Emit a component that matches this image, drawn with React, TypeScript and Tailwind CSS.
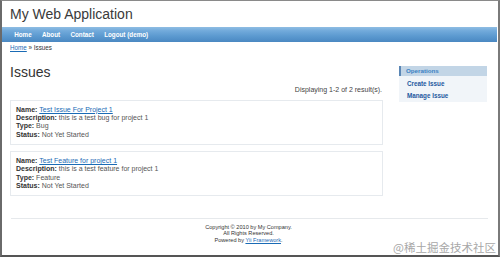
import React from "react";

const F = { fontFamily: '"Liberation Sans", Arial, sans-serif' };

function Card({ title, desc, type }: { title: string; desc: string; type: string }) {
  return (
    <div className="border border-[#e6eaee] bg-white pl-[5px] pt-[5px] pb-[4.4px] text-[7px] leading-[8.4px] text-[#555]">
      <div>
        <b className="text-[#333]">Name:</b>{" "}
        <a className="text-[#1a6bb5] underline">{title}</a>
      </div>
      <div>
        <b className="text-[#333]">Description:</b> {desc}
      </div>
      <div>
        <b className="text-[#333]">Type:</b> {type}
      </div>
      <div>
        <b className="text-[#333]">Status:</b> Not Yet Started
      </div>
    </div>
  );
}

export default function App() {
  return (
    <div
      style={F}
      className="relative w-[500px] h-[257px] overflow-hidden bg-white border-t border-t-[#8a8a8a] border-l-2 border-l-[#6a6a6a] border-r-2 border-r-[#7a7a7a] border-b-2 border-b-[#555]"
    >
      <div className="h-[26px] pl-[8px] pt-[5px] text-[14px] leading-[16px] text-[#3a3a3a]">
        My Web Application
      </div>
      <div className="mr-[1px] h-[15px] flex items-center pl-[7px] bg-[linear-gradient(180deg,#8fbde3_0%,#72aadb_25%,#5c9ad0_60%,#4a88c2_100%)]">
        {["Home", "About", "Contact", "Logout (demo)"].map((t) => (
          <span key={t} className="px-[5.15px] text-[6.3px] font-bold text-white leading-[8px]">
            {t}
          </span>
        ))}
      </div>
      <div className="pl-[8px] pt-[2px] h-[10px] text-[6.3px] leading-[8px] text-[#333]">
        <a className="text-[#1a6bb5] underline">Home</a> » Issues
      </div>
      <div className="flex items-start">
        <div className="ml-[8px] w-[373px]">
          <div className="mt-[12px] text-[14px] leading-[16px] text-[#333]">Issues</div>
          <div className="mt-[6px] text-right pr-[1px] text-[7px] leading-[8px] text-[#444]">
            Displaying 1-2 of 2 result(s).
          </div>
          <div className="mt-[5.5px]">
            <Card title="Test Issue For Project 1" desc="this is a test bug for project 1" type="Bug" />
          </div>
          <div className="mt-[6.5px]">
            <Card title="Test Feature for project 1" desc="this is a test feature for project 1" type="Feature" />
          </div>
        </div>
        <div className="ml-[16px] w-[88px] mt-[14px] bg-[#f1f5f9]">
          <div className="h-[10px] border-l-2 border-l-[#5a86b5] bg-[#c2d5e6] pl-[5px] text-[6.2px] font-bold leading-[10px] text-[#3b82c4]">
            Operations
          </div>
          <div className="pl-[8px] pt-[2px] pb-[0px] text-[6.3px] font-bold leading-[12px] text-[#1d58a0]">
            <div>Create Issue</div>
            <div>Manage Issue</div>
          </div>
        </div>
      </div>
      <div className="ml-[9px] mt-[22px] w-[477px] h-px bg-[#e6e9ec]" />
      <div className="pt-[4.6px] pr-[3px] text-center text-[5.6px] leading-[6.8px] text-[#333]">
        <div>Copyright © 2010 by My Company.</div>
        <div>All Rights Reserved.</div>
        <div>
          Powered by <a className="text-[#1a6bb5] underline">Yii Framework</a>.
        </div>
      </div>
      <div
        className="absolute right-[2px] bottom-[1px] text-[11.5px] leading-[13px] text-[#a8a8a8]"
        style={{ fontFamily: '"Noto Sans CJK SC", sans-serif' }}
      >
        @稀土掘金技术社区
      </div>
    </div>
  );
}
